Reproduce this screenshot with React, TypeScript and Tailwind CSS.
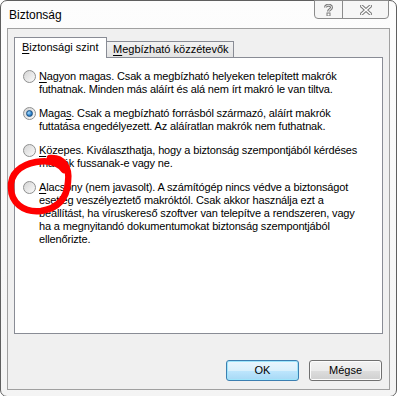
const font = { fontFamily: '"Liberation Sans", Arial, sans-serif' };

interface Option {
  key: string;
  access: number;
  lines: string[];
  checked?: boolean;
}

const options: Option[] = [
  {
    key: "high-very",
    access: 0,
    lines: [
      "Nagyon magas. Csak a megbízható helyeken telepített makrók",
      "futhatnak. Minden más aláírt és alá nem írt makró le van tiltva.",
    ],
  },
  {
    key: "high",
    access: 4,
    checked: true,
    lines: [
      "Magas. Csak a megbízható forrásból származó, aláírt makrók",
      "futtatása engedélyezett. Az aláíratlan makrók nem futhatnak.",
    ],
  },
  {
    key: "medium",
    access: 0,
    lines: [
      "Közepes. Kiválaszthatja, hogy a biztonság szempontjából kérdéses",
      "makrók fussanak-e vagy ne.",
    ],
  },
  {
    key: "low",
    access: 0,
    lines: [
      "Alacsony (nem javasolt). A számítógép nincs védve a biztonságot",
      "esetleg veszélyeztető makróktól. Csak akkor használja ezt a",
      "beállítást, ha víruskereső szoftver van telepítve a rendszeren, vagy",
      "ha a megnyitandó dokumentumokat biztonság szempontjából",
      "ellenőrizte.",
    ],
  },
];

const Radio: React.FC<{ checked?: boolean }> = ({ checked }) => (
  <div className="flex h-[13px] w-[13px] shrink-0 items-center justify-center rounded-full border border-[#8e8f8f] bg-gradient-to-br from-[#d4d4d4] to-[#fbfbfb]">
    {checked && (
      <div className="h-[7px] w-[7px] rounded-full border border-[#1c4f7f] bg-[radial-gradient(circle_at_35%_35%,#a6dcff,#2a7fc9_60%,#16578f)]" />
    )}
  </div>
);

const Line: React.FC<{ text: string; access?: number }> = ({ text, access }) => {
  if (access === undefined) return <div className="whitespace-nowrap">{text}</div>;
  return (
    <div className="whitespace-nowrap">
      {text.slice(0, access)}
      <u className="underline-offset-[2px]">{text[access]}</u>
      {text.slice(access + 1)}
    </div>
  );
};

const Button: React.FC<{ label: string; focused?: boolean }> = ({ label, focused }) => (
  <div
    className={`flex h-[21px] w-[73px] items-center justify-center rounded-[3px] border text-[11px] text-black ${
      focused
        ? "border-[#3c7fb1] bg-[linear-gradient(#eaf6fd_0%,#d9f0fc_50%,#bee6fd_51%,#a7d9f5_100%)] shadow-[inset_0_0_0_1px_#9ee5fb]"
        : "border-[#707070] bg-[linear-gradient(#f2f2f2_0%,#ebebeb_50%,#dddddd_51%,#cfcfcf_100%)] shadow-[inset_0_0_0_1px_#fcfcfc]"
    }`}
  >
    {label}
  </div>
);

export default function App() {
  return (
    <div className="relative h-[396px] w-[397px] overflow-hidden bg-white" style={font}>
      <div className="flex h-[397px] w-[397px] flex-col rounded-[7px] border border-[#5f5f5f] bg-[linear-gradient(#fdfdfd,#f4f4f4)] px-[6px] pb-[6px]">
        {/* title bar */}
        <div className="flex h-[27px] items-start justify-between">
          <div className="pl-[2px] pt-[7px] text-[12px] leading-[14px] text-black">Biztonság</div>
          <div className="-mt-px mr-px flex h-[19px] rounded-b-[4px] border border-[#8b8b8b] bg-[#f6f6f6]">
            <div className="flex w-[28px] items-center justify-center border-r border-[#8b8b8b]">
              <svg width="9" height="12" viewBox="0 0 9 12">
                <path d="M1.5 3.5 C1.5 0.5 7.5 0.5 7.5 3.5 C7.5 5.5 4.5 5.5 4.5 7.5" fill="none" stroke="#7a7a7a" strokeWidth="3" />
                <path d="M1.5 3.5 C1.5 0.5 7.5 0.5 7.5 3.5 C7.5 5.5 4.5 5.5 4.5 7.5" fill="none" stroke="#fff" strokeWidth="1" />
                <rect x="3" y="9" width="3" height="3" fill="#fff" stroke="#7a7a7a" strokeWidth="1" />
              </svg>
            </div>
            <div className="flex w-[45px] items-center justify-center">
              <svg width="12" height="10" viewBox="0 0 12 10">
                <path d="M1.5 1 L10.5 9 M10.5 1 L1.5 9" stroke="#7a7a7a" strokeWidth="3.4" strokeLinecap="square" />
                <path d="M1.5 1 L10.5 9 M10.5 1 L1.5 9" stroke="#fff" strokeWidth="1.4" strokeLinecap="square" />
              </svg>
            </div>
          </div>
        </div>

        {/* client area */}
        <div className="flex flex-1 flex-col border border-[#a0a0a0] bg-[#f0f0f0] px-[6px] pt-[8px] text-[11px] text-black">
          <div className="flex items-end">
            <div className="relative z-10 -mb-px flex h-[21px] w-[93px] items-center border border-b-0 border-[#898c95] bg-white pl-[7px] pb-[1px]">
              <Line text="Biztonsági szint" access={0} />
            </div>
            <div className="flex h-[16px] w-[127px] items-center border-t border-r border-[#898c95] bg-[linear-gradient(#f2f2f2,#e3e3e3)] pl-[6px]">
              <Line text="Megbízható közzétevők" access={0} />
            </div>
          </div>
          <div className="flex h-[277px] flex-col gap-[11px] border border-[#898c95] bg-white pl-[8px] pt-[12px] leading-[13px] tracking-[-0.15px]">
            {options.map((o) => (
              <div key={o.key} className="flex items-start gap-[3px]">
                <Radio checked={o.checked} />
                <div>
                  {o.lines.map((l, i) => (
                    <Line key={i} text={l} access={i === 0 ? o.access : undefined} />
                  ))}
                </div>
              </div>
            ))}
          </div>
          <div className="mr-px mt-[26px] flex justify-end gap-[10px]">
            <Button label="OK" focused />
            <Button label="Mégse" />
          </div>
        </div>
      </div>

      {/* red marker annotation */}
      <svg className="pointer-events-none absolute left-0 top-0" width="397" height="396">
        <path
          d="M50 158 C63 157 70 167 68 182 C67 197 60 208 41 211 C23 213 11 202 11 188 C10 174 20 165 36 162 C48 160 58 162 64 170"
          fill="none"
          stroke="#ff0000"
          strokeWidth="6.5"
          strokeLinecap="round"
        />
      </svg>
    </div>
  );
}
